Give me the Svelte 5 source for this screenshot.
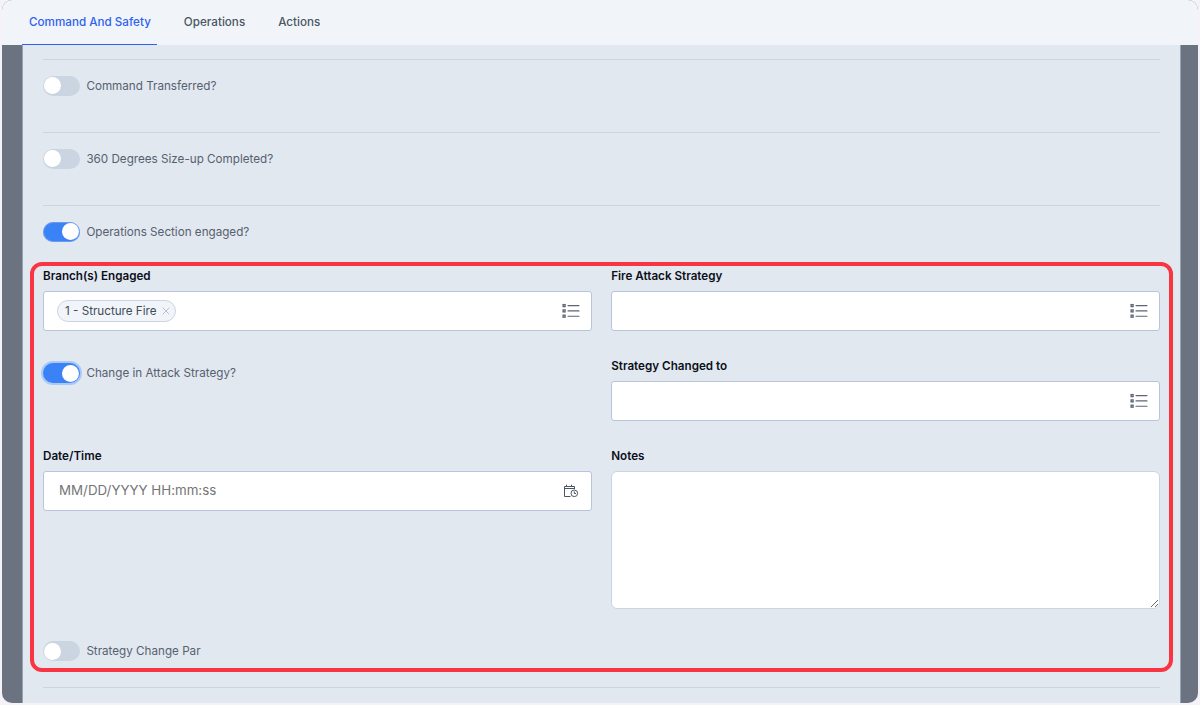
<script lang="ts">
  const tabs = ['Command And Safety', 'Operations', 'Actions'];

  let activeTab = $state('Command And Safety');
  let commandTransferred = $state(false);
  let sizeUpCompleted = $state(false);
  let operationsEngaged = $state(true);
  let strategyChange = $state(true);
  let strategyChangePar = $state(false);
  let branches = $state(['1 - Structure Fire']);
  let dateTime = $state('');
  let notes = $state('');

  function removeBranch(name: string) {
    branches = branches.filter((b) => b !== name);
  }
</script>

{#snippet toggle(label: string, on: boolean, onToggle: () => void, focused = false)}
  <div class="toggle-row">
    <button class="switch" class:on class:focused role="switch" aria-checked={on} aria-label={label} onclick={onToggle}>
      <span class="knob"></span>
    </button>
    <span class="toggle-label">{label}</span>
  </div>
{/snippet}

{#snippet listIcon()}
  <svg class="list-icon" width="18" height="16" viewBox="0 0 18 16" fill="none" stroke="#5b6577">
    <rect x="1.1" y="1.6" width="2" height="2" stroke-width="1.3" />
    <rect x="1.1" y="6.9" width="2" height="2" stroke-width="1.3" />
    <rect x="1.1" y="12.2" width="2" height="2" stroke-width="1.3" />
    <path d="M6 2.6h11M6 7.9h11M6 13.2h11" stroke-width="1.1" stroke-linecap="round" />
  </svg>
{/snippet}

<div class="window">
  <nav class="tabs">
    {#each tabs as tab}
      <button class="tab" class:active={tab === activeTab} onclick={() => (activeTab = tab)}>{tab}</button>
    {/each}
  </nav>

  <main class="panel">
    <section class="question">
      {@render toggle('Command Transferred?', commandTransferred, () => (commandTransferred = !commandTransferred))}
    </section>
    <section class="question">
      {@render toggle('360 Degrees Size-up Completed?', sizeUpCompleted, () => (sizeUpCompleted = !sizeUpCompleted))}
    </section>
    <section class="question operations">
      {@render toggle('Operations Section engaged?', operationsEngaged, () => (operationsEngaged = !operationsEngaged))}
    </section>

    <div class="fields">
      <div class="field">
        <span class="label">Branch(s) Engaged</span>
        <div class="control">
          {#each branches as branch}
            <span class="chip">
              {branch}
              <button class="chip-remove" aria-label="Remove" onclick={() => removeBranch(branch)}>
                <svg width="8" height="8" viewBox="0 0 8 8" stroke="#b6c2d2" stroke-width="1">
                  <path d="M.7.7l6.6 6.6M7.3.7L.7 7.3" />
                </svg>
              </button>
            </span>
          {/each}
          {@render listIcon()}
        </div>
      </div>
      <div class="field">
        <span class="label">Fire Attack Strategy</span>
        <div class="control">{@render listIcon()}</div>
      </div>

      <div class="field change">
        {@render toggle('Change in Attack Strategy?', strategyChange, () => (strategyChange = !strategyChange), true)}
      </div>
      <div class="field">
        <span class="label">Strategy Changed to</span>
        <div class="control">{@render listIcon()}</div>
      </div>

      <div class="field">
        <label class="label" for="date-time">Date/Time</label>
        <div class="control">
          <input id="date-time" type="text" placeholder="MM/DD/YYYY HH:mm:ss" bind:value={dateTime} />
          <svg class="date-icon" width="16" height="14" viewBox="0 0 16 14" fill="none" stroke="#4b5563" stroke-width="1">
            <path d="M7.5 12.5H1.5V2.5H11.5V5M1.5 4.5H11.5M3.5.7V2.5M8.5.7V2.5" />
            <circle cx="11.3" cy="9.3" r="3.3" />
            <path d="M11.3 7.4V9.5H13" />
          </svg>
        </div>
      </div>
      <div class="field">
        <label class="label" for="notes">Notes</label>
        <textarea id="notes" bind:value={notes}></textarea>
      </div>
    </div>

    <div class="par">
      {@render toggle('Strategy Change Par', strategyChangePar, () => (strategyChangePar = !strategyChangePar))}
    </div>
    <hr />
  </main>

  <div class="highlight"></div>
</div>

<style>
  :global(body) {
    background: #f5f2f8;
    overflow: hidden;
  }

  .window {
    position: relative;
    box-sizing: border-box;
    width: 1196px;
    height: 703px;
    margin: 0 2px;
    display: flex;
    flex-direction: column;
    overflow: hidden;
    border-radius: 10px;
    background: #6b7280;
    font-family: Inter, "Liberation Sans", sans-serif;
    font-size: 11.67px;
  }

  button {
    font: inherit;
    border: none;
    padding: 0;
    cursor: pointer;
  }

  .tabs {
    display: flex;
    flex: none;
    height: 45px;
    padding-left: 20px;
    gap: 20px;
    background: #f1f5f9;
  }

  .tab {
    box-sizing: border-box;
    padding: 0 6px 1px 7px;
    border-bottom: 1px solid transparent;
    background: none;
    color: #4b5563;
    font-weight: 500;
  }

  .tab.active {
    color: #2f62ee;
    border-bottom-color: #2f62ee;
  }

  .panel {
    box-sizing: border-box;
    flex: 1;
    margin: 0 17px 0 20px;
    padding: 13.5px 20px 0;
    border: solid #94a3b8;
    border-width: 0 1px;
    background: #e2e8f0;
  }

  .question {
    box-sizing: border-box;
    height: 73px;
    padding-top: 16px;
    border-top: 1px solid #cbd5e1;
  }

  .question.operations {
    height: 62.5px;
  }

  .toggle-row {
    display: flex;
    align-items: center;
    gap: 6.4px;
    height: 20px;
  }

  .toggle-label {
    padding-bottom: 1px;
    color: #56616f;
  }

  .question .toggle-label {
    padding-bottom: 0;
  }

  .switch {
    box-sizing: border-box;
    display: flex;
    align-items: center;
    width: 37px;
    height: 20px;
    padding: 0 1px 0 0.5px;
    border-radius: 10px;
    background: #cbd5e1;
  }

  .switch.on {
    justify-content: flex-end;
    background: #3b82f6;
    box-shadow: inset 0 0 0 1px rgba(160, 185, 235, 0.45);
  }

  .switch.focused {
    box-shadow: 0 0 0 2px #a9c9f6;
  }

  .knob {
    width: 17px;
    height: 17px;
    border-radius: 50%;
    background: #fff;
  }

  .fields {
    display: grid;
    grid-template-columns: 1fr 1fr;
    grid-template-rows: 90px 90px 162px;
    column-gap: 19.4px;
  }

  .field {
    display: flex;
    flex-direction: column;
    gap: 7px;
  }

  .field.change {
    padding-top: 6px;
  }

  .label {
    height: 17px;
    line-height: 18px;
    color: #0b0f19;
    font-weight: 600;
  }

  .control {
    box-sizing: border-box;
    display: flex;
    align-items: center;
    height: 40px;
    padding: 0 11px 0 14px;
    border: 1px solid #b8c4dc;
    border-radius: 3px;
    background: #fff;
  }

  .chip {
    box-sizing: border-box;
    display: flex;
    align-items: center;
    gap: 5px;
    height: 22px;
    margin-left: -1px;
    padding: 0 5px 1px 7px;
    border: 1px solid #cbd5e1;
    border-radius: 11px;
    background: #f1f5f9;
    color: #414b5a;
  }

  .chip-remove {
    display: flex;
    background: none;
  }

  .list-icon,
  .date-icon {
    margin-left: auto;
    flex: none;
  }

  .date-icon {
    margin-right: 1px;
  }

  input {
    flex: 1;
    min-width: 0;
    padding: 0 0 2px 1px;
    border: none;
    outline: none;
    background: none;
    font: inherit;
    font-size: 13.33px;
  }

  input::placeholder {
    color: #757575;
  }

  textarea {
    box-sizing: border-box;
    width: 100%;
    height: 138px;
    padding: 8px 14px;
    border: 1px solid #cbd5e1;
    border-radius: 6px;
    outline: none;
    background: #fff;
    font: inherit;
    resize: both;
  }

  .par {
    padding: 32px 0 26px;
  }

  hr {
    height: 1px;
    margin: 0;
    border: none;
    background: #cbd5e1;
  }

  /* callout drawn over the fields */
  .highlight {
    position: absolute;
    box-sizing: border-box;
    left: 28px;
    top: 262px;
    width: 1143px;
    height: 410px;
    border: 4px solid #f93443;
    border-radius: 12px;
    pointer-events: none;
  }
</style>
